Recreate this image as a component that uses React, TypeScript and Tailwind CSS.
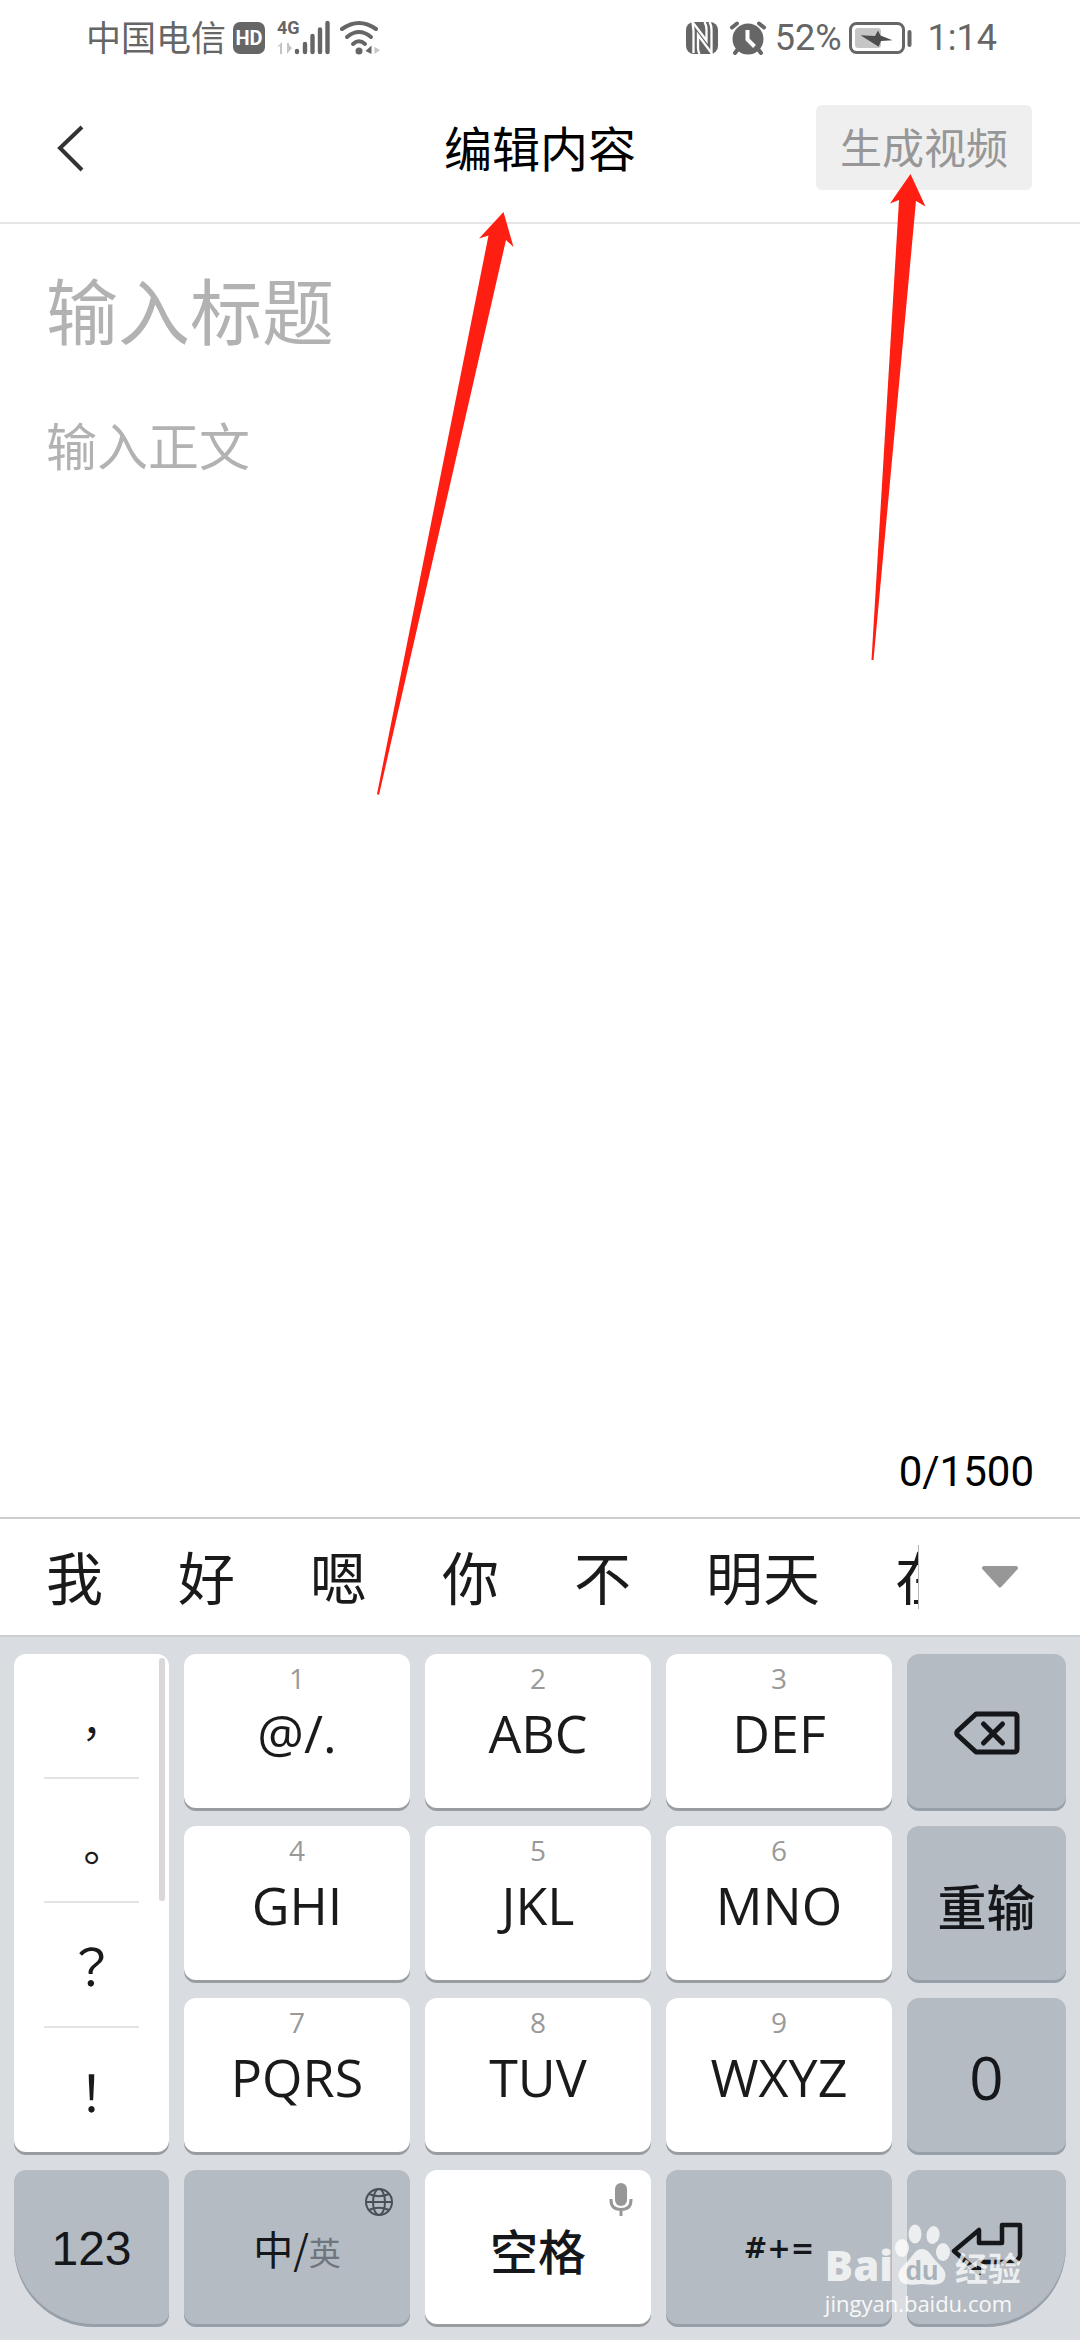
import { type ReactNode } from 'react'

const candidates = ['我', '好', '嗯', '你', '不', '明天', '在']

const letterRows = [
  [['1', '@/.'], ['2', 'ABC'], ['3', 'DEF']],
  [['4', 'GHI'], ['5', 'JKL'], ['6', 'MNO']],
  [['7', 'PQRS'], ['8', 'TUV'], ['9', 'WXYZ']],
]

const latin = "font-['Open_Sans','Noto_Sans_CJK_SC',sans-serif]"
const cjk = "font-['Noto_Sans_CJK_SC',sans-serif]"

function StatusBar() {
  return (
    <div className="flex h-[75px] items-center justify-between pr-[83px] pl-[86px] text-[#666666]">
      <div className="flex items-center">
        <span className={`${cjk} pb-[3px] text-[35px] leading-[40px]`}>中国电信</span>
        <span className="ml-[7px] flex h-8 w-8 items-center justify-center rounded-[7px] bg-[#666666] font-['Roboto',sans-serif] text-[20px] font-bold text-white">
          HD
        </span>
        <div className="relative ml-3 h-9 w-[54px]">
          <span className="absolute top-0 left-0 font-['Roboto',sans-serif] text-[18px] leading-[16px] font-bold">4G</span>
          <svg className="h-9 w-[54px]" viewBox="0 0 54 36" aria-hidden="true">
            <path d="M0 27 L5 22 V34 H3 V26 Z M10 23 V34 L15 28 L12 25 V23 Z" fill="#c4c4c4" />
            <path
              d="M20 31 V32 M28 24 V32 M35.500 16 V32 M43 9.500 V32 M50.500 3 V32"
              stroke="#666666"
              strokeWidth="4.400"
              strokeLinecap="round"
            />
          </svg>
        </div>
        <svg className="ml-2 h-9 w-[42px]" viewBox="0 0 42 36" aria-hidden="true">
          <g stroke="#666666" strokeWidth="4" strokeLinecap="round" fill="none">
            <path d="M3 9 Q20 -3 37 9" />
            <path d="M8 17 Q20 7 32 17" />
            <path d="M14 24 Q20 18.500 26 24" />
          </g>
          <circle cx="20" cy="31" r="3.500" fill="#666666" />
          <path d="M26.500 31 L32.500 25.500 V34 Z" fill="#666666" />
          <path d="M35.500 27 L41 30 L35.500 34 Z" fill="#c4c4c4" />
        </svg>
      </div>
      <div className="flex items-center">
        <svg className="h-8 w-8" viewBox="0 0 32 32" aria-hidden="true">
          <rect width="32" height="32" rx="8" fill="#666666" />
          <path
            d="M7.500 31 V9 L6.500 0 L20.500 18.500 V8 Q20.500 3 18.500 0 M13.500 32 Q12 29 12 26 V13 L25.500 31 V8 Q25.500 3 23.500 0"
            stroke="#ffffff"
            strokeWidth="2.300"
            fill="none"
          />
        </svg>
        <svg className="ml-3 h-[34px] w-9" viewBox="0 0 36 34" aria-hidden="true">
          <circle cx="18" cy="18" r="15.500" fill="#666666" />
          <path d="M2 6.500 L7 2.500 M34 6.500 L29 2.500 M5 32 L8 28 M31 32 L28 28" stroke="#666666" strokeWidth="4" strokeLinecap="round" />
          <path d="M17.500 9 V18.500 L24.500 25.500" stroke="#ffffff" strokeWidth="4" fill="none" />
        </svg>
        <span className="ml-[9px] font-['Roboto',sans-serif] text-[36px] leading-[40px]">52%</span>
        <svg className="ml-[7px] h-8 w-[63px]" viewBox="0 0 63 32" role="img" aria-label="充电中">
          <rect x="1.500" y="1.500" width="53" height="29" rx="6" fill="none" stroke="#666666" strokeWidth="3" />
          <rect x="6" y="6" width="26" height="20" rx="3" fill="#c6c6c6" />
          <path d="M11.500 13.300 L26 14 L29 8.500 L31.500 13.500 L43.500 18.300 L32 19 L29.700 24.700 Z" fill="#4e4e4e" />
          <path d="M60.500 10 V23" stroke="#666666" strokeWidth="4" strokeLinecap="round" />
        </svg>
        <span className="ml-4 font-['Roboto',sans-serif] text-[36px] leading-[40px]">1:14</span>
      </div>
    </div>
  )
}

function Header() {
  return (
    <header className="grid h-[149px] grid-cols-[1fr_auto_1fr] items-center border-b-2 border-[#e5e5e5] px-12 pb-[2px]">
      <button type="button" aria-label="返回" className="flex h-16 w-12 items-center justify-self-start pl-2">
        <svg className="h-12 w-8" viewBox="0 0 32 48" fill="none" stroke="#333333" strokeWidth="4">
          <path d="M26 3 L4 24 L26 46" />
        </svg>
      </button>
      <h1 className={`${cjk} pb-1 text-[48px] leading-[56px] text-black`}>编辑内容</h1>
      <button
        type="button"
        className={`${cjk} h-[85px] w-[216px] justify-self-end rounded-md bg-[#efefef] pb-1 text-[42px] leading-[48px] text-[#979797]`}
      >
        生成视频
      </button>
    </header>
  )
}

function Key({ children, label, gray, corner = '' }: { children: ReactNode; label?: string; gray?: boolean; corner?: string }) {
  const tone = gray ? 'bg-[#b4bbc2] shadow-[0_3px_0_#979fa8]' : 'bg-white shadow-[0_3px_0_#999ca0]'
  return (
    <button
      type="button"
      aria-label={label}
      className={`${tone} ${latin} relative flex h-[154px] flex-col items-center justify-center rounded-xl pt-1 text-[#15171a] ${corner}`}
    >
      {children}
    </button>
  )
}

function LetterKey({ digit, letters }: { digit: string; letters: string }) {
  return (
    <button
      type="button"
      className={`${latin} flex h-[154px] flex-col items-center gap-[14px] rounded-xl bg-white pt-[10px] text-[#1a1a1a] shadow-[0_3px_0_#999ca0]`}
    >
      <span className="text-[28px] leading-[28px] text-[#999999]">{digit}</span>
      <span className="text-[52px] leading-[54px]">{letters}</span>
    </button>
  )
}

function PunctuationColumn() {
  const cell = "flex items-center justify-center font-['Noto_Sans_CJK_TC',sans-serif] leading-[50px] text-[#1a1a1a]"
  return (
    <div className="relative row-span-3 grid h-[498px] grid-rows-4 rounded-xl bg-white px-[30px] shadow-[0_3px_0_#999ca0]">
      <button type="button" className={`${cell} border-b-2 border-[#e3e3e3] pt-8 text-[42px]`}>，</button>
      <button type="button" className={`${cell} border-b-2 border-[#e3e3e3] pt-8 text-[42px]`}>。</button>
      <button type="button" className={`${cell} border-b-2 border-[#e3e3e3] text-[50px]`}>？</button>
      <button type="button" className={`${cell} text-[50px]`}>！</button>
      <div className="absolute top-1 right-1 h-[243px] w-[6px] rounded-full bg-[#dad7da]" />
    </div>
  )
}

function CandidateBar() {
  return (
    <div className="flex h-[120px] items-center border-y-2 border-[#cccfd0] bg-white">
      <div className="ml-[46px] flex h-full min-w-0 flex-1 items-center gap-[75px] overflow-hidden">
        {candidates.map((word) => (
          <button key={word} type="button" className={`${cjk} shrink-0 pb-1 text-[57px] leading-[88px] text-[#1a1a1a]`}>
            {word}
          </button>
        ))}
      </div>
      <div className="h-16 w-px bg-[#b5b5b5]" />
      <button type="button" aria-label="更多候选词" className="flex h-full w-[161px] items-center justify-center">
        <svg className="h-[22px] w-[38px]" viewBox="0 0 38 22">
          <path d="M3 2 H35 L19 19.500 Z" fill="#979797" stroke="#979797" strokeWidth="4" strokeLinejoin="round" />
        </svg>
      </button>
    </div>
  )
}

function BackspaceIcon() {
  return (
    <svg className="h-[44px] w-[66px]" viewBox="0 0 66 44" fill="none" stroke="#15171a" strokeWidth="5" strokeLinecap="round" strokeLinejoin="round">
      <path d="M22 3 H60 Q63 3 63 6 V38 Q63 41 60 41 H22 L3.500 24 Q2 22 3.500 20 Z" />
      <path d="M29.500 13 L48.500 32 M48.500 13 L29.500 32" />
    </svg>
  )
}

function EnterIcon() {
  return (
    <svg className="h-[55px] w-[72px]" viewBox="0 0 72 55" fill="none" stroke="#15171a" strokeWidth="4.500" strokeLinejoin="round">
      <path d="M3 29 L28 8 V21 H51 V3 H69 V33 Q69 36 64 40 H28 V51 Z" />
    </svg>
  )
}

function GlobeIcon() {
  return (
    <svg className="absolute top-[18px] right-[17px] h-7 w-7" viewBox="0 0 28 28" fill="none" stroke="#4a5058" strokeWidth="2">
      <circle cx="14" cy="14" r="13" />
      <ellipse cx="14" cy="14" rx="6" ry="13" />
      <path d="M1 14 H27 M4 6 Q14 10.500 24 6 M4 22 Q14 17.500 24 22" />
    </svg>
  )
}

function MicIcon() {
  return (
    <svg className="absolute top-[13px] right-[18px] h-[34px] w-6" viewBox="0 0 24 34" fill="none" stroke="#979797" strokeWidth="3">
      <rect x="6" y="0" width="12" height="23" rx="6" fill="#979797" stroke="none" />
      <path d="M2 16 V17 Q2 26.500 12 26.500 Q22 26.500 22 17 V16 M12 26.500 V33" />
    </svg>
  )
}

function Watermark() {
  return (
    <div className="pointer-events-none absolute right-[59px] bottom-[20px] flex flex-col text-white/75">
      <div className="flex items-end">
        <span className="font-['Open_Sans',sans-serif] text-[42px] leading-[42px] font-extrabold">Bai</span>
        <div className="relative h-[62px] w-[58px]">
          <svg className="h-[62px] w-[58px]" viewBox="0 0 58 62" fill="currentColor">
            <ellipse cx="9" cy="24" rx="7" ry="9" />
            <ellipse cx="22" cy="10" rx="6.500" ry="9.500" />
            <ellipse cx="40" cy="11" rx="6.500" ry="9" transform="rotate(10 40 11)" />
            <ellipse cx="50" cy="28" rx="7" ry="9" />
            <path d="M29 25 C36 25 38 32 44 38 C50 44 54 48 52 54 C50 62 40 61 29 60 C18 61 8 62 6 54 C4 48 8 44 14 38 C20 32 22 25 29 25 Z" />
          </svg>
          <span className="absolute inset-x-0 bottom-0 text-center font-['Liberation_Sans',sans-serif] text-[27px] leading-[30px] font-bold text-[#a9b1b9]">
            du
          </span>
        </div>
        <span className="ml-1 font-['Noto_Sans_CJK_SC',sans-serif] text-[33px] leading-[38px] font-bold">经验</span>
      </div>
      <span className="font-['Open_Sans',sans-serif] text-[22px] leading-[34px] text-white/90">jingyan.baidu.com</span>
    </div>
  )
}

function Keyboard() {
  return (
    <div className="relative bg-[#d9dce0] px-[14px] pt-[17px] pb-[16px]">
      <div className="grid grid-cols-[155fr_226fr_226fr_226fr_159fr] gap-x-[15px] gap-y-[18px]">
        <PunctuationColumn />
        {letterRows[0].map(([digit, letters]) => (
          <LetterKey key={digit} digit={digit} letters={letters} />
        ))}
        <Key gray label="删除">
          <BackspaceIcon />
        </Key>
        {letterRows[1].map(([digit, letters]) => (
          <LetterKey key={digit} digit={digit} letters={letters} />
        ))}
        <Key gray>
          <span className={`${cjk} text-[49px] leading-[56px] font-medium`}>重输</span>
        </Key>
        {letterRows[2].map(([digit, letters]) => (
          <LetterKey key={digit} digit={digit} letters={letters} />
        ))}
        <Key gray>
          <span className="text-[60px] leading-[60px]">0</span>
        </Key>
        <Key gray corner="rounded-bl-[80px]">
          <span className="font-['Liberation_Sans',sans-serif] text-[48px] leading-[56px]">123</span>
        </Key>
        <Key gray>
          <GlobeIcon />
          <span className={`${cjk} text-[40px] leading-[56px]`}>
            中/<span className="text-[32px] text-[#6f757c]">英</span>
          </span>
        </Key>
        <Key>
          <MicIcon />
          <span className={`${cjk} text-[48px] leading-[56px] font-medium`}>空格</span>
        </Key>
        <Key gray>
          <span className="font-['DejaVu_Sans',sans-serif] text-[28px] leading-[56px] font-bold">#+=</span>
        </Key>
        <Key gray label="换行" corner="rounded-br-[80px]">
          <EnterIcon />
        </Key>
      </div>
      <Watermark />
    </div>
  )
}

function Arrows() {
  return (
    <svg className="pointer-events-none absolute top-0 right-0 h-[810px] w-[720px]" viewBox="360 0 720 810" fill="#ff1f12" aria-hidden="true">
      <path d="M503.500 212 L513.500 247 L506 240 L379 795 L377 794 L488.500 235.500 L479 238.500 Z" />
      <path d="M910.500 174 L925.500 206.500 L916 201 L873.500 660 L871.500 660 L899 200 L890 203.500 Z" />
    </svg>
  )
}

export default function App() {
  return (
    <div className="relative flex min-h-screen w-full flex-col overflow-hidden bg-white">
      <StatusBar />
      <Header />
      <main className="flex flex-1 flex-col px-[46px] pt-8">
        <input
          aria-label="标题"
          placeholder="输入标题"
          className={`${cjk} h-[104px] w-full bg-transparent text-[72px] leading-[104px] outline-none placeholder:text-[#b2b2b2] placeholder:opacity-100`}
        />
        <textarea
          aria-label="正文"
          placeholder="输入正文"
          className={`${cjk} mt-12 w-full flex-1 resize-none bg-transparent text-[51px] leading-[72px] outline-none placeholder:text-[#b2b2b2] placeholder:opacity-100`}
        />
        <p className="pb-[21px] text-right font-['Roboto',sans-serif] text-[42px] leading-[48px] text-black">0/1500</p>
      </main>
      <CandidateBar />
      <Keyboard />
      <Arrows />
    </div>
  )
}
